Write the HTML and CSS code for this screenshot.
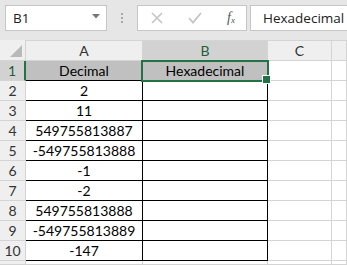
FILE: index.html
```html
<!DOCTYPE html>
<html lang="en">
<head>
    <meta charset="UTF-8">
    <title>Hexadecimal</title>
    <link rel="stylesheet" href="styles.css">
</head>
<body>
    <div class="formula-bar">
        <div class="name-box">
            <span>B1</span>
            <svg class="caret" width="8" height="5" viewBox="0 0 8 5"><path d="M0 0h8L4 4.5z" fill="#777"/></svg>
        </div>
        <div class="grip"><i></i><i></i><i></i></div>
        <div class="fx-box">
            <svg width="12" height="12" viewBox="0 0 12 12"><path d="M1 1l10 10M11 1L1 11" stroke="#c4c4c4" stroke-width="1.6"/></svg>
            <svg width="14" height="12" viewBox="0 0 14 12"><path d="M1 6l4 4.5L13 1" fill="none" stroke="#c4c4c4" stroke-width="1.8"/></svg>
            <span class="fx">f<sub>x</sub></span>
        </div>
        <div class="formula">Hexadecimal</div>
    </div>

    <div class="sheet">
        <div class="corner"></div>
        <div class="col-head">A</div>
        <div class="col-head active">B</div>
        <div class="col-head">C</div>
        <div class="col-head"></div>

        <div class="row-head active">1</div>
        <div class="cell table title">Decimal</div>
        <div class="cell table title selected">Hexadecimal</div>
        <div class="cell"></div>
        <div class="cell"></div>

        <div class="row-head">2</div>
        <div class="cell table">2</div>
        <div class="cell table"></div>
        <div class="cell"></div>
        <div class="cell"></div>

        <div class="row-head">3</div>
        <div class="cell table">11</div>
        <div class="cell table"></div>
        <div class="cell"></div>
        <div class="cell"></div>

        <div class="row-head">4</div>
        <div class="cell table">549755813887</div>
        <div class="cell table"></div>
        <div class="cell"></div>
        <div class="cell"></div>

        <div class="row-head">5</div>
        <div class="cell table">-549755813888</div>
        <div class="cell table"></div>
        <div class="cell"></div>
        <div class="cell"></div>

        <div class="row-head">6</div>
        <div class="cell table">-1</div>
        <div class="cell table"></div>
        <div class="cell"></div>
        <div class="cell"></div>

        <div class="row-head">7</div>
        <div class="cell table">-2</div>
        <div class="cell table"></div>
        <div class="cell"></div>
        <div class="cell"></div>

        <div class="row-head">8</div>
        <div class="cell table">549755813888</div>
        <div class="cell table"></div>
        <div class="cell"></div>
        <div class="cell"></div>

        <div class="row-head">9</div>
        <div class="cell table">-549755813889</div>
        <div class="cell table"></div>
        <div class="cell"></div>
        <div class="cell"></div>

        <div class="row-head">10</div>
        <div class="cell table">-147</div>
        <div class="cell table"></div>
        <div class="cell"></div>
        <div class="cell"></div>

        <div class="row-head"></div>
        <div class="cell"></div>
        <div class="cell"></div>
        <div class="cell"></div>
        <div class="cell"></div>
    </div>
</body>
</html>
```

FILE: styles.css
```css
:root {
    --bar-bg: #e6e6e6;
    --grid: #d4d4d4;
    --head-bg: #efefef;
    --head-active: #d2d2d2;
    --green: #217346;
}

* {
    box-sizing: border-box;
}

body {
    margin: 0;
    width: 347px;
    height: 265px;
    overflow: hidden;
    background: #fff;
    font-family: "Lato", "Open Sans", sans-serif;
    color: #000;
}

.formula-bar {
    display: flex;
    align-items: flex-start;
    height: 40px;
    padding: 5px 0 0 5px;
    background: var(--bar-bg);
    overflow: hidden;
}

.name-box {
    flex: none;
    width: 102px;
    height: 26px;
    background: #fff;
    border: 1px solid #c6c6c6;
    display: flex;
    align-items: center;
    justify-content: space-between;
    padding: 0 6px 0 7px;
    font-family: "Open Sans", sans-serif;
    font-size: 13.5px;
    color: #222;
}

.caret {
    margin-top: -4px;
}

.grip {
    flex: none;
    width: 30px;
    height: 26px;
    display: flex;
    flex-direction: column;
    align-items: center;
    justify-content: center;
    gap: 2px;
}

.grip i {
    width: 2px;
    height: 2px;
    background: #a8a8a8;
}

.fx-box {
    flex: none;
    width: 110px;
    height: 26px;
    background: #fff;
    border: 1px solid #c6c6c6;
    display: flex;
    align-items: center;
    justify-content: space-between;
    padding: 0 8px 0 13px;
}

.fx {
    font-family: "Liberation Serif", serif;
    font-style: italic;
    font-size: 14px;
    color: #555;
    margin-right: 3px;
}

.fx sub {
    font-size: 9px;
    vertical-align: -1px;
}

.formula {
    flex: 1;
    min-width: 0;
    margin-left: 3px;
    height: 26px;
    background: #fff;
    border: 1px solid #c6c6c6;
    border-right: 0;
    padding-left: 12px;
    font-family: "Open Sans", sans-serif;
    font-size: 13.5px;
    line-height: 24px;
    color: #222;
    white-space: nowrap;
    overflow: hidden;
}

.sheet {
    display: grid;
    grid-template-columns: 26px 117px 125px 64px 1fr;
    grid-template-rows: 21px repeat(10, 20px) 4px;
    height: 225px;
    overflow: hidden;
    font-size: 14px;
}

.corner,
.col-head,
.row-head {
    background: var(--head-bg);
    border-right: 1px solid var(--grid);
    border-bottom: 1px solid var(--grid);
    color: #333;
    display: flex;
    align-items: center;
    justify-content: center;
}

.corner {
    position: relative;
}

.corner::after {
    content: "";
    position: absolute;
    right: 3px;
    bottom: 3px;
    border-style: solid;
    border-width: 0 0 12px 12px;
    border-color: transparent transparent #b9b9b9 transparent;
}

.col-head {
    border-top: 1px solid var(--grid);
}

.col-head.active {
    background: var(--head-active);
    color: #1e5e3a;
}

.row-head.active {
    background: var(--head-active);
    color: #1e5e3a;
    border-right: 2px solid var(--green);
}

.cell {
    border-right: 1px solid var(--grid);
    border-bottom: 1px solid var(--grid);
    display: flex;
    align-items: center;
    justify-content: center;
}

.cell.table {
    border-right-color: #000;
    border-bottom-color: #000;
}

.cell.title {
    background: #c0c0c0;
}

.selected {
    position: relative;
}

.selected::before {
    content: "";
    position: absolute;
    left: -2px;
    top: -1px;
    right: -2px;
    bottom: -2px;
    border: 2px solid var(--green);
}

.selected::after {
    content: "";
    position: absolute;
    right: -4px;
    bottom: -4px;
    width: 7px;
    height: 7px;
    background: var(--green);
    border: 1px solid #fff;
}
```
